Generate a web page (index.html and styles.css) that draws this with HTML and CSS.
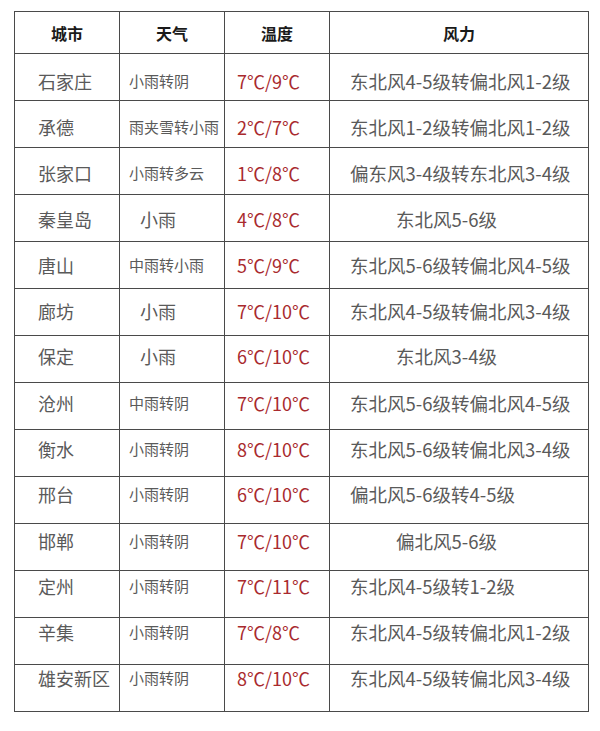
FILE: index.html
```html
<!DOCTYPE html>
<html lang="zh">
<head>
<meta charset="utf-8">
<title>天气预报</title>
<link rel="stylesheet" href="styles.css">
</head>
<body>
<table class="weather">
  <colgroup>
    <col class="c-city"><col class="c-sky"><col class="c-temp"><col class="c-wind">
  </colgroup>
  <thead>
    <tr><th>城市</th><th>天气</th><th>温度</th><th>风力</th></tr>
  </thead>
  <tbody>
    <tr><td class="city">石家庄</td><td class="sky">小雨转阴</td><td class="temp">7℃/9℃</td><td class="wind">东北风4-5级转偏北风1-2级</td></tr>
    <tr><td class="city">承德</td><td class="sky">雨夹雪转小雨</td><td class="temp">2℃/7℃</td><td class="wind">东北风1-2级转偏北风1-2级</td></tr>
    <tr><td class="city">张家口</td><td class="sky">小雨转多云</td><td class="temp">1℃/8℃</td><td class="wind">偏东风3-4级转东北风3-4级</td></tr>
    <tr><td class="city">秦皇岛</td><td class="sky big">小雨</td><td class="temp">4℃/8℃</td><td class="wind short">东北风5-6级</td></tr>
    <tr><td class="city">唐山</td><td class="sky">中雨转小雨</td><td class="temp">5℃/9℃</td><td class="wind">东北风5-6级转偏北风4-5级</td></tr>
    <tr><td class="city">廊坊</td><td class="sky big">小雨</td><td class="temp">7℃/10℃</td><td class="wind">东北风4-5级转偏北风3-4级</td></tr>
    <tr><td class="city">保定</td><td class="sky big">小雨</td><td class="temp">6℃/10℃</td><td class="wind short">东北风3-4级</td></tr>
    <tr><td class="city">沧州</td><td class="sky">中雨转阴</td><td class="temp">7℃/10℃</td><td class="wind">东北风5-6级转偏北风4-5级</td></tr>
    <tr><td class="city">衡水</td><td class="sky">小雨转阴</td><td class="temp">8℃/10℃</td><td class="wind">东北风5-6级转偏北风3-4级</td></tr>
    <tr><td class="city">邢台</td><td class="sky">小雨转阴</td><td class="temp">6℃/10℃</td><td class="wind">偏北风5-6级转4-5级</td></tr>
    <tr><td class="city">邯郸</td><td class="sky">小雨转阴</td><td class="temp">7℃/10℃</td><td class="wind short">偏北风5-6级</td></tr>
    <tr><td class="city">定州</td><td class="sky">小雨转阴</td><td class="temp">7℃/11℃</td><td class="wind">东北风4-5级转1-2级</td></tr>
    <tr><td class="city">辛集</td><td class="sky">小雨转阴</td><td class="temp">7℃/8℃</td><td class="wind">东北风4-5级转偏北风1-2级</td></tr>
    <tr><td class="city">雄安新区</td><td class="sky">小雨转阴</td><td class="temp">8℃/10℃</td><td class="wind">东北风4-5级转偏北风3-4级</td></tr>
  </tbody>
</table>
</body>
</html>
```
FILE: styles.css
```css
html, body {
  margin: 0;
  padding: 0;
  background: #ffffff;
}
body {
  padding: 11px 0 0 14px;
  font-family: "Noto Sans CJK SC", "Noto Sans", sans-serif;
}
.weather {
  border-collapse: collapse;
  table-layout: fixed;
  width: 574px;
}
.c-city, .c-sky, .c-temp { width: 105px; }
.c-wind { width: 259px; }
.weather th, .weather td {
  border: 1px solid #4a4a4a;
  padding: 0;
  white-space: nowrap;
  overflow: hidden;
}
.weather th {
  height: 41px;
  font-size: 16px;
  font-weight: 700;
  color: #1a1a1a;
  text-align: center;
  vertical-align: middle;
}
.weather tbody tr {
  height: 47px;
}
.weather td {
  color: #5a5a5a;
  vertical-align: top;
  text-align: left;
  line-height: 24px;
  padding-top: 12px;
}
.weather tbody tr:nth-child(1) td { padding-top: 15px; }
.weather tbody tr:nth-child(2) td { padding-top: 14px; }
.weather tbody tr:nth-child(3) td { padding-top: 13px; }
.weather tbody tr:nth-child(4) td { padding-top: 12px; }
.weather tbody tr:nth-child(5) td { padding-top: 11px; }
.weather tbody tr:nth-child(6) td { padding-top: 10px; }
.weather tbody tr:nth-child(7) td { padding-top: 8px; }
.weather tbody tr:nth-child(8) td { padding-top: 8px; }
.weather tbody tr:nth-child(9) td { padding-top: 7px; }
.weather tbody tr:nth-child(10) td { padding-top: 5px; }
.weather tbody tr:nth-child(11) td { padding-top: 5px; }
.weather tbody tr:nth-child(12) td { padding-top: 3px; }
.weather tbody tr:nth-child(13) td { padding-top: 2px; }
.weather tbody tr:nth-child(14) td { padding-top: 1px; }
.weather td.city {
  font-size: 18px;
  padding-left: 23px;
}
.weather td.sky {
  font-size: 15px;
  padding-left: 9px;
}
.weather td.sky.big {
  font-size: 18px;
  padding-left: 20px;
}
.weather td.temp {
  font-size: 18px;
  color: #a92a2e;
  padding-left: 12px;
}
.weather td.wind {
  font-size: 18.5px;
  padding-left: 20px;
}
.weather td.wind.short {
  padding-left: 66px;
}
```
